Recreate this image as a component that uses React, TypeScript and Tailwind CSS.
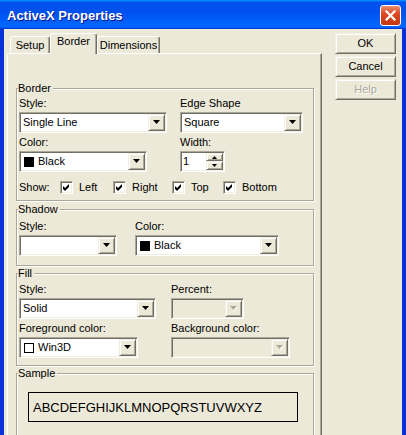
import type { ReactNode } from 'react'
import clsx from 'clsx'

// classic 3D frames (ButtonHighlight / Light / Shadow / DkShadow)
const raised =
  'border border-t-[#f1efe2] border-l-[#f1efe2] border-r-[#716f64] border-b-[#716f64] shadow-[inset_1px_1px_0_#fff,inset_-1px_-1px_0_#aca899]'
const sunken =
  'border border-t-[#aca899] border-l-[#aca899] border-r-white border-b-white shadow-[inset_1px_1px_0_#716f64,inset_-1px_-1px_0_#f1efe2] p-[1px]'

function Arrow({ disabled }: { disabled?: boolean }) {
  return (
    <svg width="8" height="5" viewBox="0 0 8 5">
      {disabled && <polygon points="1,1 8,1 4.5,5" fill="#fff" />}
      <polygon points="0,0 7,0 3.5,4" fill={disabled ? '#aca899' : '#000'} />
    </svg>
  )
}

function Combo({
  width,
  value,
  swatch,
  disabled,
}: {
  width: string
  value?: string
  swatch?: 'black' | 'white'
  disabled?: boolean
}) {
  return (
    <div className={clsx('flex h-[21px]', sunken, width, disabled ? 'bg-[#ece9d8]' : 'bg-white')}>
      <div className={clsx('flex flex-1 items-center', swatch ? 'gap-[4px] pl-[3px]' : 'pl-[2px]')}>
        {swatch === 'black' && <span className="h-[10px] w-[10px] bg-black" />}
        {swatch === 'white' && <span className="h-[10px] w-[10px] border border-black bg-white" />}
        {value}
      </div>
      <div className={clsx('flex w-[17px] items-center justify-center bg-[#ece9d8]', raised)}>
        <Arrow disabled={disabled} />
      </div>
    </div>
  )
}

function Spinner() {
  return (
    <div className={clsx('flex h-[21px] w-[45px] bg-white', sunken)}>
      <div className="flex flex-1 items-center pl-[1px]">1</div>
      <div className="flex w-[17px] flex-col">
        <div className={clsx('flex h-[8px] items-center justify-center bg-[#ece9d8]', raised)}>
          <svg width="5" height="3" viewBox="0 0 5 3">
            <polygon points="2.5,0 5,3 0,3" fill="#000" />
          </svg>
        </div>
        <div className={clsx('flex flex-1 items-center justify-center bg-[#ece9d8]', raised)}>
          <svg width="5" height="3" viewBox="0 0 5 3">
            <polygon points="0,0 5,0 2.5,3" fill="#000" />
          </svg>
        </div>
      </div>
    </div>
  )
}

function Check({ label, width }: { label: string; width?: string }) {
  return (
    <div className={clsx('flex items-center gap-[6px]', width)}>
      <span className={clsx('h-[13px] w-[13px] bg-white', sunken)}>
        <svg width="9" height="9" viewBox="0 0 9 9" className="block">
          <polygon points="1,3 3,5 7,1 7,4 3,8 1,6" fill="#000" />
        </svg>
      </span>
      {label}
    </div>
  )
}

function Label({ children, className }: { children: ReactNode; className?: string }) {
  return <div className={clsx('h-[13px]', className)}>{children}</div>
}

function Group({ title, className, children }: { title: string; className?: string; children: ReactNode }) {
  return (
    <fieldset
      className={clsx(
        'w-[298px] border border-[#aca899] pl-[2px] shadow-[inset_1px_1px_0_#fff,1px_1px_0_#fff]',
        className,
      )}
    >
      <legend className="-ml-[1px] bg-[#ece9d8] pr-[2px] leading-[13px]">{title}</legend>
      {children}
    </fieldset>
  )
}

function Tab({ label, selected, width }: { label: string; selected?: boolean; width: string }) {
  return (
    <div
      className={clsx(
        'flex justify-center rounded-t-[3px] border-l border-t border-r border-l-white border-t-white border-r-[#716f64] bg-[#ece9d8] shadow-[inset_-1px_0_0_#aca899]',
        width,
        selected ? 'relative z-10 -mb-[1px] h-[21px] pt-[1px]' : 'h-[17px] pt-[2px]',
      )}
    >
      {label}
    </div>
  )
}

function Button({ children, disabled }: { children: ReactNode; disabled?: boolean }) {
  return (
    <button
      className={clsx(
        'flex h-[21px] w-[61px] items-center justify-center bg-[#ece9d8]',
        raised,
        disabled && 'text-[#aca899] [text-shadow:1px_1px_0_#fff]',
      )}
    >
      {children}
    </button>
  )
}

export default function App() {
  return (
    <div className="flex h-[435px] w-[406px] flex-col overflow-hidden bg-[#ece9d8] font-['Liberation_Sans',Arial,sans-serif] text-[11px] leading-[13px] text-black">
      {/* Title bar */}
      <div className="flex h-[29px] shrink-0 items-start bg-[linear-gradient(180deg,#0997ff,#0053ee_8%,#0050ee_40%,#06f_88%,#06f_93%,#005bff_95%,#003dd7_96%,#003dd7)] pl-[7px] pt-[8px]">
        <span className="text-[13px] font-bold leading-[15px] text-white [text-shadow:1px_1px_0_#0f1089]">
          ActiveX Properties
        </span>
        <div className="-mt-[3px] ml-auto mr-[5px] flex h-[21px] w-[21px] items-center justify-center rounded-[3px] border border-white bg-[linear-gradient(180deg,#ec8d70,#dc4a24_40%,#c4360f)]">
          <svg width="11" height="11" viewBox="0 0 11 11">
            <path d="M1.5 1.5 L9.5 9.5 M9.5 1.5 L1.5 9.5" stroke="#fff" strokeWidth="2.2" strokeLinecap="square" />
          </svg>
        </div>
      </div>

      <div className="flex min-h-0 flex-1">
        <div className="w-[4px] bg-[#0831d9]" />

        <div className="flex flex-1 pl-[3px] pt-[4px]">
          {/* Tabs + page */}
          <div className="flex w-[315px] flex-col">
            <div className="flex h-[20px] items-end pl-[3px]">
              <Tab label="Setup" width="w-[40px]" />
              <Tab label="Border" width="w-[47px]" selected />
              <Tab label="Dimensions" width="w-[63px]" />
            </div>
            <div className="h-[400px] border-l border-t border-r border-l-white border-t-white border-r-[#716f64] pl-[8px] pt-[28px] shadow-[inset_-1px_0_0_#aca899]">
              <Group title="Border" className="pb-[6px] pt-[2px]">
                <div className="flex">
                  <div className="w-[161px]">
                    <Label>Style:</Label>
                    <div className="mt-[2px]">
                      <Combo width="w-[148px]" value="Single Line" />
                    </div>
                    <Label className="mt-[3px]">Color:</Label>
                    <div className="mt-[2px]">
                      <Combo width="w-[128px]" value="Black" swatch="black" />
                    </div>
                  </div>
                  <div>
                    <Label>Edge Shape</Label>
                    <div className="mt-[2px]">
                      <Combo width="w-[123px]" value="Square" />
                    </div>
                    <Label className="mt-[3px]">Width:</Label>
                    <div className="mt-[2px]">
                      <Spinner />
                    </div>
                  </div>
                </div>
                <div className="mt-[9px] flex h-[13px] items-center">
                  <span className="w-[41px]">Show:</span>
                  <Check label="Left" width="w-[53px]" />
                  <Check label="Right" width="w-[59px]" />
                  <Check label="Top" width="w-[51px]" />
                  <Check label="Bottom" />
                </div>
              </Group>

              <Group title="Shadow" className="mt-[2px] pb-[9px] pt-[4px]">
                <div className="flex">
                  <div className="w-[116px]">
                    <Label>Style:</Label>
                    <div className="mt-[2px]">
                      <Combo width="w-[98px]" />
                    </div>
                  </div>
                  <div>
                    <Label>Color:</Label>
                    <div className="mt-[2px]">
                      <Combo width="w-[144px]" value="Black" swatch="black" />
                    </div>
                  </div>
                </div>
              </Group>

              <Group title="Fill" className="mt-[1px] pb-[7px] pt-[3px]">
                <div className="grid grid-cols-[152px_1fr]">
                  <div>
                    <Label>Style:</Label>
                    <div className="mt-[2px]">
                      <Combo width="w-[137px]" value="Solid" />
                    </div>
                  </div>
                  <div>
                    <Label>Percent:</Label>
                    <div className="mt-[2px]">
                      <Combo width="w-[73px]" disabled />
                    </div>
                  </div>
                  <div className="mt-[3px]">
                    <Label>Foreground color:</Label>
                    <div className="mt-[2px]">
                      <Combo width="w-[119px]" value="Win3D" swatch="white" />
                    </div>
                  </div>
                  <div className="mt-[3px]">
                    <Label>Background color:</Label>
                    <div className="mt-[2px]">
                      <Combo width="w-[119px]" disabled />
                    </div>
                  </div>
                </div>
              </Group>

              <Group title="Sample" className="mt-[1px] h-[120px] pt-[12px]">
                <div className="ml-[9px] flex h-[30px] w-[270px] items-center border border-black pl-[4px] text-[13px] leading-[15px]">
                  ABCDEFGHIJKLMNOPQRSTUVWXYZ
                </div>
              </Group>
            </div>
          </div>

          {/* Buttons */}
          <div className="ml-[13px] flex flex-col gap-[2px]">
            <Button>OK</Button>
            <Button>Cancel</Button>
            <Button disabled>Help</Button>
          </div>
        </div>

        <div className="w-[4px] bg-[#0831d9]" />
      </div>
    </div>
  )
}
